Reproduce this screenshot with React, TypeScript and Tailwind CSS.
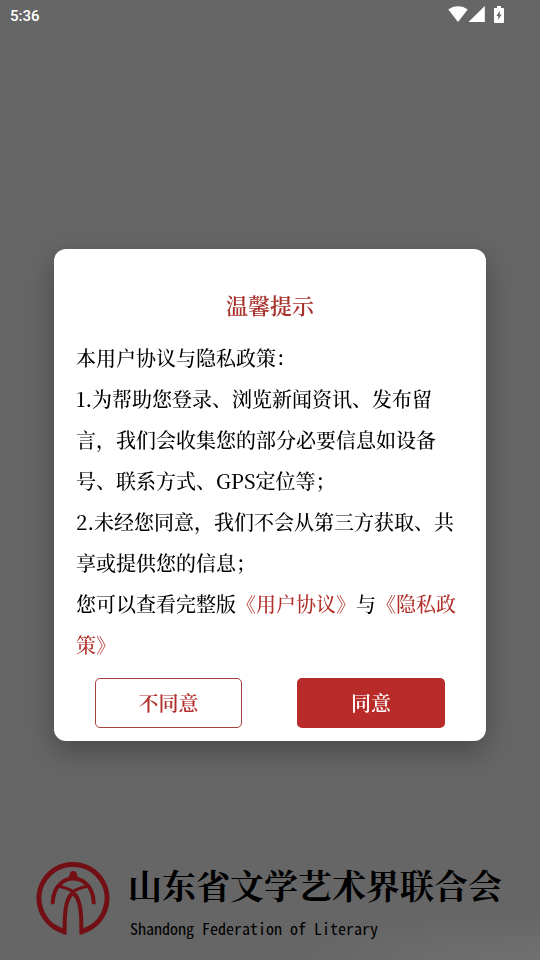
const StatusBar = () => {
  return (
    <header className="flex items-center justify-between pl-2.5 pr-[35px] h-8 text-white">
      <span className="text-[15px] font-medium font-[Roboto,sans-serif]">
        5:36
      </span>
      <div className="flex items-center pb-1">
        <svg width="20" height="16" viewBox="0 0 20 16" fill="currentColor">
          <path d="M10 16 L0.3 3.6 C5.8 -1 14.2 -1 19.7 3.6 Z" />
        </svg>
        <svg width="17" height="16" viewBox="0 0 17 16" fill="currentColor">
          <path d="M0.5 16 L16.8 0 V16 Z" />
        </svg>
        <svg
          className="ml-2"
          width="12"
          height="17"
          viewBox="0 0 12 17"
          fill="currentColor"
        >
          <path d="M4 0 H8 V2 H10.5 Q11 2 11 2.7 V16.2 Q11 17 10.3 17 H1.7 Q1 17 1 16.2 V2.7 Q1 2 1.7 2 H4 Z" />
          <path d="M6.9 4.5 L3.4 10 H5.4 L5 14 L8.7 8.4 H6.6 Z" fill="#666666" />
        </svg>
      </div>
    </header>
  );
};

const Logo = () => {
  return (
    <svg
      className="shrink-0"
      width="74"
      height="74"
      viewBox="0 0 74 74"
      fill="none"
      stroke="#720f14"
    >
      <path d="M28 69.2 A34 34 0 1 1 46 69.2" strokeWidth="5" />
      <path
        d="M28.6 72.5 C28.4 50 29.5 36 37 31 C44.5 36 45.6 50 45.4 72.5"
        strokeWidth="4"
      />
      <path
        d="M16.7 40.5 C17.2 31 20.5 24.5 25.5 20.8 C29.5 17.6 33 16.6 37.2 16.6 C41.4 16.6 45 17.6 49 20.8 C54 24.5 57.2 31 57.7 40.5"
        strokeWidth="4"
        strokeLinecap="round"
      />
      <path
        d="M21.5 24 Q31.5 25.8 37 29.8 Q42.5 25.8 52.5 24"
        strokeWidth="3"
      />
      <path
        d="M33.8 12.6 A3.5 3.5 0 0 1 40.8 12.6 L43 17 H31.5 Z"
        fill="#720f14"
        stroke="none"
      />
    </svg>
  );
};

const Footer = () => {
  return (
    <footer className="flex items-start gap-[18px] pl-9 pb-4 bg-[radial-gradient(ellipse_at_bottom_right,#707070_0%,#6c6c6c_15%,#666666_32%)]">
      <Logo />
      <div className="flex flex-col text-black whitespace-nowrap">
        <p className="text-[34px] leading-[46px] font-bold font-['Noto_Serif_CJK_SC','Noto_Sans_CJK_SC',serif]">
          山东省文学艺术界联合会
        </p>
        <p className="pl-0.5 pt-2 pb-1 text-[16px] leading-6 font-['Noto_Sans_Mono_CJK_SC','Liberation_Mono',monospace]">
          Shandong Federation of Literary
        </p>
      </div>
    </footer>
  );
};

const PrivacyDialog = () => {
  return (
    <div className="fixed inset-0 flex items-center justify-center pt-[30px]">
      <div
        role="dialog"
        aria-labelledby="dialog-title"
        className="w-4/5 px-[22px] pt-9 pb-[13px] bg-white rounded-xl shadow-[0_10px_28px_rgba(0,0,0,0.3)]"
      >
        <h2
          id="dialog-title"
          className="text-[22px] leading-10 font-semibold text-center text-[#a8322c]"
        >
          温馨提示
        </h2>
        <div className="pt-3 text-[20px] leading-[41px] font-medium text-black">
          <p>本用户协议与隐私政策：</p>
          <p>1.为帮助您登录、浏览新闻资讯、发布留言，我们会收集您的部分必要信息如设备号、联系方式、GPS定位等；</p>
          <p>2.未经您同意，我们不会从第三方获取、共享或提供您的信息；</p>
          <p>
            您可以查看完整版
            <a href="#agreement" className="text-[#b0302b]">《用户协议》</a>
            与
            <a href="#privacy" className="text-[#b0302b]">《隐私政策》</a>
          </p>
        </div>
        <div className="flex justify-between pt-[13px] px-[19px]">
          <button
            type="button"
            className="w-[147px] h-[50px] text-[20px] font-semibold text-[#b0302b] border border-[#a8403c] rounded-[5px]"
          >
            不同意
          </button>
          <button
            type="button"
            className="w-[148px] h-[50px] text-[20px] font-semibold text-white bg-[#b92b28] rounded-[5px]"
          >
            同意
          </button>
        </div>
      </div>
    </div>
  );
};

const App = () => {
  return (
    <div className="flex flex-col justify-between min-h-screen bg-[#666666] font-['Noto_Serif_CJK_SC','Liberation_Serif','Noto_Sans_CJK_SC',serif]">
      <StatusBar />
      <Footer />
      <PrivacyDialog />
    </div>
  );
};

export default App;
